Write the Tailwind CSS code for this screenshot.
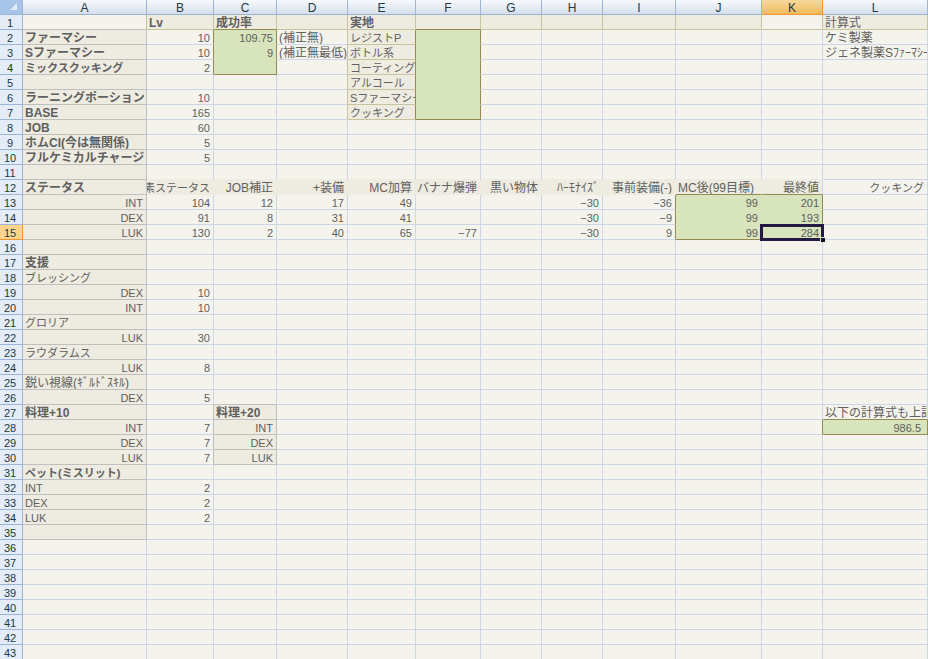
<!DOCTYPE html>
<html lang="ja">
<head>
  <meta charset="UTF-8">
  <meta name="viewport" content="width=device-width, initial-scale=1.0">
  <script src="https://cdn.jsdelivr.net/npm/@tailwindcss/browser@4"></script>
  <title>製薬計算シート</title>
</head>
<body class="bg-[#f5f4ec] overflow-hidden">
  <table class="w-full table-fixed border-separate border-spacing-0 font-['Liberation_Sans','Noto_Sans_CJK_JP',sans-serif] text-[11px] leading-[14px] text-[#606060] whitespace-nowrap">
    <colgroup>
      <col class="w-[23px]">
      <col class="w-[124px]">
      <col class="w-[67px]">
      <col class="w-[63px]">
      <col class="w-[71px]">
      <col class="w-[68px]">
      <col class="w-[65px]">
      <col class="w-[61px]">
      <col class="w-[61px]">
      <col class="w-[73px]">
      <col class="w-[86px]">
      <col class="w-[61px]">
      <col class="w-[105px]">
    </colgroup>
    <thead>
      <tr id="letters">
        <td class="h-[15px] p-0 border-r border-b border-[#9bb5d6] bg-[#a9c4e9]">
          <svg class="block ml-auto mr-1" width="8" height="8" viewBox="0 0 8 8"><path d="M7 0v7H0z" fill="#e4ebf5"/></svg>
        </td>
      </tr>
    </thead>
    <tbody id="rows"></tbody>
  </table>

  <script>
    const COLS = "ABCDEFGHIJKL";
    const LAST_ROW = 43;

    // l = left, r = right, b = bold (left), w = japanese text, a little larger
    const cells = {
      B1: ["Lv", "bw"], C1: ["成功率", "bw"], E1: ["実地", "bw"], L1: ["計算式", "lw"],
      A2: ["ファーマシー", "bw"], B2: ["10", "r"], C2: ["109.75", "r"], D2: ["(補正無)", "lw"], E2: ["レジストP", "l"], L2: ["ケミ製薬", "lw"],
      A3: ["Sファーマシー", "bw"], B3: ["10", "r"], C3: ["9", "r"], D3: ["(補正無最低)", "lw"], E3: ["ボトル系", "l"], L3: ["ジェネ製薬Sﾌｧｰﾏｼｰ", "lw"],
      A4: ["ミックスクッキング", "b"], B4: ["2", "r"], E4: ["コーティング薬", "l"],
      E5: ["アルコール", "l"],
      A6: ["ラーニングポーション", "bw"], B6: ["10", "r"], E6: ["Sファーマシー", "l"],
      A7: ["BASE", "bw"], B7: ["165", "r"], E7: ["クッキング", "l"],
      A8: ["JOB", "bw"], B8: ["60", "r"],
      A9: ["ホムCI(今は無関係)", "bw"], B9: ["5", "r"],
      A10: ["フルケミカルチャージ", "bw"], B10: ["5", "r"],
      A12: ["ステータス", "bw"], B12: ["素ステータス", "r"], C12: ["JOB補正", "rw"], D12: ["+装備", "rw"], E12: ["MC加算", "rw"], F12: ["バナナ爆弾", "rw"], G12: ["黒い物体", "rw"],
      H12: ["ﾊｰﾓﾅｲｽﾞ", "rw"], I12: ["事前装備(-)", "rw"], J12: ["MC後(99目標)", "lw"], K12: ["最終値", "rw"], L12: ["クッキング", "r"],
      A13: ["INT", "r"], B13: ["104", "r"], C13: ["12", "r"], D13: ["17", "r"], E13: ["49", "r"], H13: ["−30", "r"], I13: ["−36", "r"], J13: ["99", "r"], K13: ["201", "r"],
      A14: ["DEX", "r"], B14: ["91", "r"], C14: ["8", "r"], D14: ["31", "r"], E14: ["41", "r"], H14: ["−30", "r"], I14: ["−9", "r"], J14: ["99", "r"], K14: ["193", "r"],
      A15: ["LUK", "r"], B15: ["130", "r"], C15: ["2", "r"], D15: ["40", "r"], E15: ["65", "r"], F15: ["−77", "r"], H15: ["−30", "r"], I15: ["9", "r"], J15: ["99", "r"], K15: ["284", "r"],
      A17: ["支援", "bw"],
      A18: ["ブレッシング", "l"],
      A19: ["DEX", "r"], B19: ["10", "r"],
      A20: ["INT", "r"], B20: ["10", "r"],
      A21: ["グロリア", "l"],
      A22: ["LUK", "r"], B22: ["30", "r"],
      A23: ["ラウダラムス", "l"],
      A24: ["LUK", "r"], B24: ["8", "r"],
      A25: ["鋭い視線(ｷﾞﾙﾄﾞｽｷﾙ)", "lw"],
      A26: ["DEX", "r"], B26: ["5", "r"],
      A27: ["料理+10", "bw"], C27: ["料理+20", "bw"], L27: ["以下の計算式も上記", "lw"],
      A28: ["INT", "r"], B28: ["7", "r"], C28: ["INT", "r"], L28: ["986.5", "i"],
      A29: ["DEX", "r"], B29: ["7", "r"], C29: ["DEX", "r"],
      A30: ["LUK", "r"], B30: ["7", "r"], C30: ["LUK", "r"],
      A31: ["ペット(ミスリット)", "b"],
      A32: ["INT", "l"], B32: ["2", "r"],
      A33: ["DEX", "l"], B33: ["2", "r"],
      A34: ["LUK", "l"], B34: ["2", "r"],
    };

    const align = {
      l: "h-[14px] overflow-hidden pt-px pl-0.5",
      r: "h-[14px] overflow-hidden pt-px pr-[3px] flex justify-end",
      i: "h-[14px] overflow-hidden pt-px pr-1.5 flex justify-end",
      b: "h-[14px] overflow-hidden pt-px pl-0.5 font-bold",
    };

    const white = "bg-[#f5f4ec]", beige = "bg-[#eeebe0]", green = "bg-[#d8e4bc]";

    function fill(c, r) {
      if ((c === "C" && r >= 2 && r <= 4) || (c === "F" && r >= 2 && r <= 7)) return green;
      if ("JK".includes(c) && r >= 13 && r <= 15) return green;
      if (c === "L" && r === 28) return green;
      if (c === "A" && r >= 2 && r <= 35) return beige;
      if (c === "C" && r >= 27 && r <= 30) return beige;
      if (c === "E" && r >= 2 && r <= 7) return beige;
      if (r === 1 && c !== "A" && c !== "K") return beige;
      if (r === 12 && c !== "L") return beige;
      return white;
    }

    function rightLine(c, r) {
      const next = COLS[COLS.indexOf(c) + 1];
      if (fill(c, r) === green && c !== "J") return "border-r-[#948a54]";
      if (next && fill(next, r) === green && c !== "J") return "border-r-[#948a54]";
      if (c === "J" && fill(c, r) === green) return "border-r-[#d8e4bc]";
      if (r === 1 || (r <= 7 && "DE".includes(c))) return "border-r-[#c8c4a0]";
      if (c === "A" && r <= 35) return "border-r-[#bfbfbf]";
      if ("BC".includes(c) && r >= 27 && r <= 30) return "border-r-[#bfbfbf]";
      if (r === 12 && c !== "K" && c !== "L") return "border-r-[#eeebe0]";
      return "border-r-[#cdd6e6]";
    }

    function bottomLine(c, r) {
      const a = fill(c, r) === green, b = fill(c, r + 1) === green;
      if (a && b) return "border-b-[#d8e4bc]";
      if (a || b) return "border-b-[#948a54]";
      if (c === "A" && r <= 35) return "border-b-[#bfbfbf]";
      if (c === "C" && r >= 26 && r <= 30) return "border-b-[#bfbfbf]";
      if (r === 1 || (c === "E" && r <= 7)) return "border-b-[#c8c4a0]";
      if ((r === 11 || r === 12) && c !== "L") return "border-b-[#eeebe0]";
      return "border-b-[#cdd6e6]";
    }

    const letters = document.getElementById("letters");
    for (const c of COLS) {
      const look = c === "K"
        ? "bg-linear-to-b from-[#f8d89a] to-[#efba5a] border-[#f29536]"
        : "bg-linear-to-b from-[#f8fafc] to-[#d5deeb] border-[#9bb5d6]";
      letters.insertAdjacentHTML("beforeend",
        `<th scope="col" class="h-[15px] p-0 border-r border-b font-normal text-center text-[12px] text-[#203a43] ${look}"><div class="h-[14px] pt-px">${c}</div></th>`);
    }

    let html = "";
    for (let r = 1; r <= LAST_ROW; r++) {
      const look = r === 15 ? "bg-[#ffd58d] border-[#f29536]" : "bg-[#e4ecf7] border-[#9bb5d6]";
      html += `<tr><th scope="row" class="h-[15px] p-0 pr-1.5 border-r border-b font-normal text-[#203a43] ${look}"><div class="h-[14px] flex justify-center pt-px pl-1">${r}</div></th>`;
      for (const c of COLS) {
        const [text, kind] = cells[c + r] || ["", "l"];
        const size = kind[1] === "w" ? "text-[12px] leading-[14px]" : "";
        const selected = c + r === "K15";
        html += `<td class="h-[15px] p-0 border-r border-b ${selected ? "relative" : ""} ${fill(c, r)} ${rightLine(c, r)} ${bottomLine(c, r)}">` +
          `<div class="${align[kind[0]]} ${size}">${text}</div>` +
          (selected ? `<div class="absolute -left-[2px] -right-[2px] -top-px -bottom-[2px] border-3 border-[#231942]"><span class="absolute -right-[4px] -bottom-[4px] size-[5px] bg-[#14121c] border-l border-t border-[#d8e4bc]"></span></div>` : "") +
          `</td>`;
      }
      html += "</tr>";
    }
    document.getElementById("rows").innerHTML = html;
  </script>
</body>
</html>
